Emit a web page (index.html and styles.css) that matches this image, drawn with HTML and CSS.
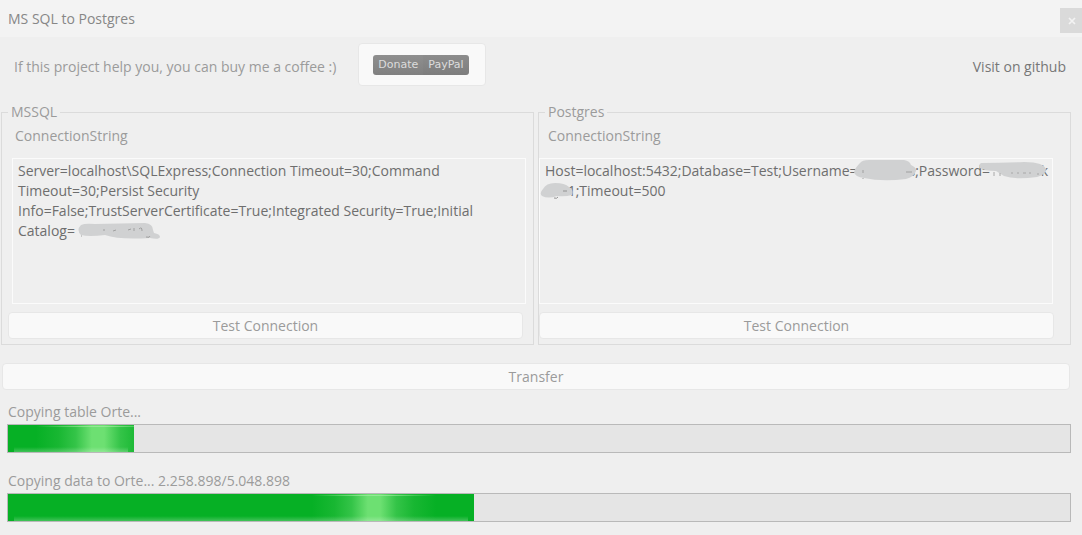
FILE: index.html
```html
<!DOCTYPE html>
<html lang="en">
<head>
<meta charset="utf-8">
<title>MS SQL to Postgres</title>
<link rel="stylesheet" href="styles.css">
</head>
<body>
<header class="titlebar">
  <h1 class="title">MS SQL to Postgres</h1>
  <button class="close" type="button" aria-label="Close"><svg width="8" height="8" viewBox="0 0 8 8"><path d="M1 1l6 6M7 1l-6 6" stroke="#f3f3f3" stroke-width="1.7" fill="none"/></svg></button>
</header>
<section class="intro">
  <p class="coffee">If this project help you, you can buy me a coffee :)</p>
  <button class="button donate" type="button"><span class="badge"><span class="badge-left">Donate</span><span class="badge-right">PayPal</span></span></button>
  <a class="github" href="#">Visit on github</a>
</section>
<main>
  <div class="panels">
    <fieldset class="panel mssql">
      <legend>MSSQL</legend>
      <label for="mssql">ConnectionString</label>
      <div class="editor">
        <textarea id="mssql" spellcheck="false">Server=localhost\SQLExpress;Connection Timeout=30;Command
Timeout=30;Persist Security
Info=False;TrustServerCertificate=True;Integrated Security=True;Initial
Catalog=</textarea>
        <svg class="smudge catalog" width="84" height="20" viewBox="0 0 84 20">
          <path d="M4 3Q8 1 18 2L68 1Q76 2 76 8L77 11Q83 12 83 15Q82 18 73 16Q42 18 28 13Q12 15 4 13Q-1 8 4 3Z" fill="#d0d1d2"/>
          <path d="M4 14h1M26 8h2M36 9l3-1M51 8l3-1M57 6v3M62 7q3-3 3 2M69 15q4 1 4-1" stroke="#a0a0a0" fill="none"/>
        </svg>
      </div>
      <button class="button test" type="button">Test Connection</button>
    </fieldset>
    <fieldset class="panel postgres">
      <legend>Postgres</legend>
      <label for="postgres">ConnectionString</label>
      <div class="editor">
        <textarea id="postgres" spellcheck="false">Host=localhost:5432;Database=Test;Username=&nbsp;&nbsp;&nbsp;&nbsp;&nbsp;&nbsp;&nbsp;&nbsp;&nbsp;&nbsp;&nbsp;&nbsp;&nbsp;&nbsp;s;Password=&nbsp;&nbsp;&nbsp;&nbsp;&nbsp;&nbsp;&nbsp;&nbsp;&nbsp;&nbsp;&nbsp;&nbsp;&nbsp;&nbsp;k
&nbsp;&nbsp;&nbsp;&nbsp;&nbsp;-1;Timeout=500</textarea>
        <svg class="smudge username" width="63" height="21" viewBox="0 0 63 21">
          <path d="M6 3Q8 0 15 0H50Q56 1 57 5Q63 8 62 11Q60 17 52 19Q28 22 10 18Q1 17 0 12Q1 8 6 3Z" fill="#d0d1d2"/>
          <path d="M9 10v3M9 18v1M52 12h6" stroke="#a0a0a0" fill="none"/>
        </svg>
        <svg class="smudge password" width="68" height="18" viewBox="0 0 68 18">
          <path d="M2 1Q22 1 45 0Q66 0 67 8Q66 13 58 15Q36 18 25 14L17 9Q5 9 1 6Q-1 3 2 1Z" fill="#d0d1d2"/>
          <path d="M15 14V10M21 14v-3M32 11h2M38 11h2M44 11h3M50 11h2M59 11v2" stroke="#a8a8a8" fill="none"/>
        </svg>
        <svg class="smudge tail" width="34" height="16" viewBox="0 0 34 16">
          <path d="M3 6Q6 0 15 0Q25 0 29 4Q34 7 32 12Q25 14 17 13Q8 16 2 13Q-1 10 3 6Z" fill="#d0d1d2"/>
          <path d="M14 15q3 1 4-1M23 8h4" stroke="#929292" fill="none"/>
        </svg>
      </div>
      <button class="button test" type="button">Test Connection</button>
    </fieldset>
  </div>
  <button class="button transfer" type="button">Transfer</button>
  <div class="task">
    <label for="tables">Copying table Orte...</label>
    <progress id="tables" class="tables" max="1062" value="126"></progress>
  </div>
  <div class="task">
    <label for="rows">Copying data to Orte... 2.258.898/5.048.898</label>
    <progress id="rows" class="rows" max="1062" value="466"></progress>
  </div>
</main>
</body>
</html>
```

FILE: styles.css
```css
* { box-sizing: border-box; }

body {
  margin: 0;
  background: #efefef;
  color: #9b9b9b;
  font: 14px/20px "Open Sans", "Noto Sans", sans-serif;
}

button, textarea { font: inherit; }

.titlebar {
  display: flex;
  align-items: center;
  justify-content: space-between;
  height: 37px;
  padding-left: 8px;
  background: #f3f3f3;
}

.title {
  margin: 0;
  color: #878787;
  font-size: 14px;
  font-weight: 400;
}

.close {
  display: flex;
  align-items: center;
  justify-content: center;
  align-self: flex-end;
  width: 22px;
  height: 25px;
  margin-bottom: 4px;
  padding: 0 0 0 2px;
  border: 0;
  background: #dadada;
}

.intro {
  display: flex;
  align-items: center;
  height: 65px;
  padding: 0 16px 10px 14px;
}

.coffee {
  margin: 0;
  padding: 4px 22px 0 0;
}

.button {
  border: 1px solid #e7e7e7;
  border-radius: 4px;
  background: #f9f9f9;
  color: #9b9b9b;
}

.donate {
  width: 128px;
  height: 43px;
  padding: 0 0 0 14px;
  text-align: left;
}

.badge {
  display: inline-flex;
  overflow: hidden;
  border-radius: 3px;
  background: linear-gradient(#8f8f8f, #808080);
  color: #dcdcdc;
  font: 11px/20px "DejaVu Sans", sans-serif;
  vertical-align: middle;
}

.badge-left, .badge-right { padding: 0 5px; }
.badge-right { background: rgba(0, 0, 0, 0.02); }

.github {
  margin-left: auto;
  padding-top: 4px;
  color: #777;
  text-decoration: none;
}

main {
  display: flex;
  flex-direction: column;
  padding: 0 11px 13px 1px;
}

.panels {
  display: grid;
  grid-template-columns: 1fr 1fr;
  gap: 4px;
}

.panel {
  display: flex;
  flex-direction: column;
  min-width: 0;
  margin: 0;
  padding: 4px 0 5px;
  border: 1px solid #dbdbdb;
}

legend { margin-left: 6px; padding: 0 3px; }
.panel label { margin-left: 13px; }
.postgres label { margin-left: 9px; }

.editor {
  position: relative;
  margin: 12px 7px 8px 10px;
}

.postgres .editor { margin: 12px 17px 8px 0; }

textarea {
  display: block;
  width: 100%;
  height: 146px;
  padding: 2px 5px;
  overflow: hidden;
  border: 1px solid #fbfbfb;
  outline: 0;
  background: #efefef;
  color: #6e6e6e;
  resize: none;
  white-space: pre;
}

.smudge { position: absolute; }
.catalog { left: 65px; top: 64px; }
.username { left: 315px; top: 2px; }
.password { left: 440px; top: 4px; }
.tail { left: 1px; top: 25px; }

.test, .transfer { height: 27px; padding: 0; line-height: 25px; }
.test { margin: 0 10px 0 6px; }
.postgres .test { margin: 0 16px 0 0; }
.transfer { margin: 18px 1px 12px; }

.task {
  display: flex;
  flex-direction: column;
  gap: 2px;
  margin-bottom: 18px;
  padding-left: 6px;
}

.task:last-child { margin-bottom: 0; }
.task label { margin-left: 1px; }

progress {
  appearance: none;
  display: block;
  width: 100%;
  height: 29px;
  border: 1px solid #b9b9b9;
  background: #e5e5e5;
}

progress::-webkit-progress-bar { background: #e5e5e5; }

progress::-webkit-progress-value {
  background:
    linear-gradient(to right, transparent, #93e995 50%, transparent) var(--glow) 1px / 124px 1px no-repeat,
    linear-gradient(transparent, rgba(255, 255, 255, 0.24)) 6px 100% / calc(100% - 12px) 5px no-repeat,
    linear-gradient(to right, #06b025, #18b732 18%, #34c448 32%, #6de072 45%, #6de072 55%, #34c448 68%, #18b732 82%, #06b025) var(--glow) 0 / 124px 100% no-repeat,
    #06b025;
}

.tables { --glow: 28px; }
.rows { --glow: 304px; }
```
